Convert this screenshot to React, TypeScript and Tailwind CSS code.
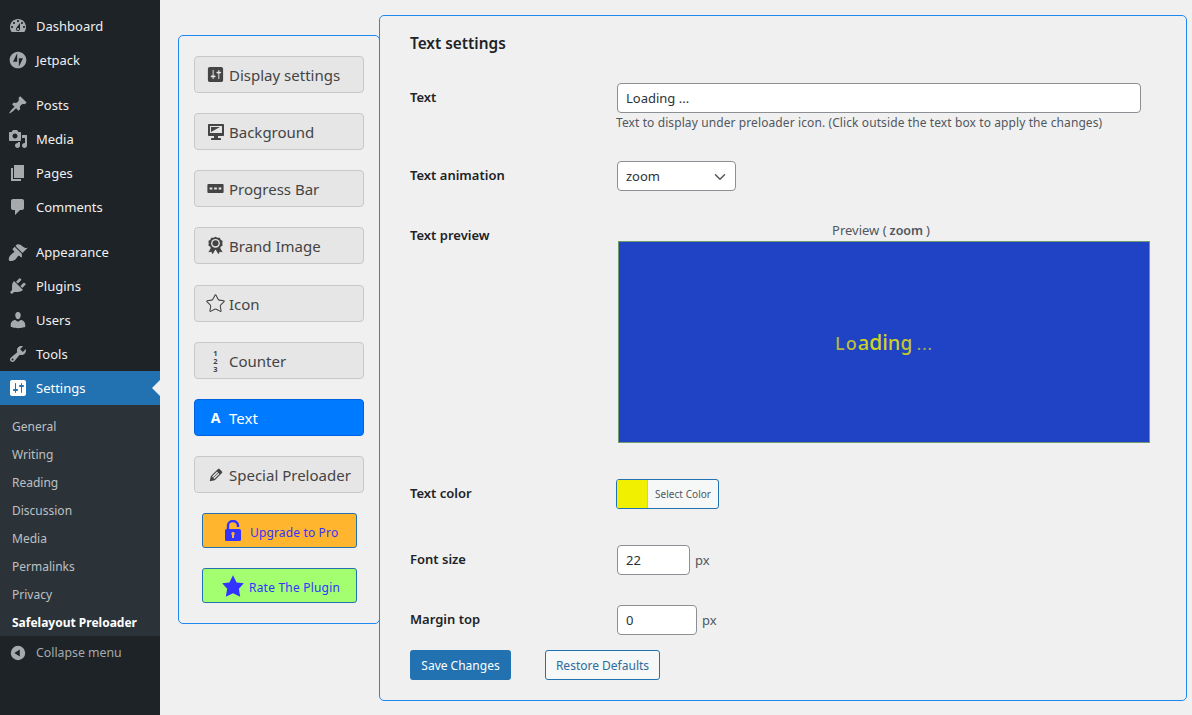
import type { ReactNode } from 'react';
import { ChevronDown, Star } from 'lucide-react';

const PATHS = {
  dashboard:
    'M3.76 16h12.48c1.1-1.37 1.76-3.11 1.76-5 0-4.42-3.58-8-8-8s-8 3.58-8 8c0 1.89.66 3.63 1.76 5zM10 4c.55 0 1 .45 1 1s-.45 1-1 1-1-.45-1-1 .45-1 1-1zM6 6c.55 0 1 .45 1 1s-.45 1-1 1-1-.45-1-1 .45-1 1-1zm8 0c.55 0 1 .45 1 1s-.45 1-1 1-1-.45-1-1 .45-1 1-1zm-5.37 5.55L12 7v6c0 1.1-.9 2-2 2s-2-.9-2-2c0-.57.24-1.08.63-1.45zM4 10c.55 0 1 .45 1 1s-.45 1-1 1-1-.45-1-1 .45-1 1-1zm12 0c.55 0 1 .45 1 1s-.45 1-1 1-1-.45-1-1 .45-1 1-1zm-5 3c0-.55-.45-1-1-1s-1 .45-1 1 .45 1 1 1 1-.45 1-1z',
  post: 'M10.44 3.02l1.82-1.82 6.36 6.35-1.83 1.82c-1.05-.68-2.48-.57-3.41.36l-.75.75c-.92.93-1.04 2.35-.35 3.41l-1.83 1.82-2.41-2.41-2.8 2.79c-.42.42-3.38 2.71-3.8 2.29s1.86-3.39 2.28-3.81l2.79-2.79L4.1 9.36l1.83-1.82c1.05.69 2.48.57 3.4-.36l.75-.75c.93-.92 1.05-2.35.36-3.41z',
  media:
    'M13 11V4c0-.55-.45-1-1-1h-1.67L9 1H5L3.67 3H2c-.55 0-1 .45-1 1v7c0 .55.45 1 1 1h10c.55 0 1-.45 1-1zM7 4.5c1.38 0 2.5 1.12 2.5 2.5S8.38 9.5 7 9.5 4.5 8.38 4.5 7 5.62 4.5 7 4.5zM14 6h5v10.5c0 1.38-1.12 2.5-2.5 2.5S14 17.88 14 16.5s1.12-2.5 2.5-2.5c.17 0 .34.02.5.05V9h-3V6zm-4 8.05V13h2v3.5c0 1.38-1.12 2.5-2.5 2.5S7 17.88 7 16.5 8.12 14 9.5 14c.17 0 .34.02.5.05z',
  pages: 'M6 15V2h10v13H6zm-1 1h8v2H3V5h2v11z',
  comments:
    'M5 2h9c1.1 0 2 .9 2 2v7c0 1.1-.9 2-2 2h-2l-5 5v-5H5c-1.1 0-2-.9-2-2V4c0-1.1.9-2 2-2z',
  appearance:
    'M14.48 11.06L7.41 3.99l1.5-1.5c.5-.56 2.3-.47 3.51.32 1.21.8 1.43 1.28 2.91 2.1 1.18.64 2.45 1.26 4.45.85zm-.71.71L6.7 4.7 4.93 6.47c-.39.39-.39 1.02 0 1.41l1.06 1.06c.39.39.39 1.03 0 1.42-.6.6-1.43 1.11-2.21 1.69-.35.26-.7.53-1.01.84C1.43 13.71 0 17 1.22 18.78c2 .7 5.07-.21 6.4-1.55.31-.31.58-.66.84-1.01.58-.78 1.09-1.61 1.69-2.21.39-.39 1.03-.39 1.42 0l1.06 1.06c.39.39 1.02.39 1.41 0z',
  plugins:
    'M13.11 4.36L9.87 7.6 8 5.73l3.24-3.24c.35-.34 1.05-.2 1.56.32.52.51.66 1.21.31 1.55zm-8 1.77l.91-1.12 9.01 9.01-1.19.84c-.71.71-2.63 1.16-3.82 1.16H6.14L4.9 17.26c-.59.59-1.54.59-2.12 0-.59-.58-.59-1.53 0-2.12l1.24-1.24v-3.88c0-1.13.4-3.19 1.09-3.89zm7.26 3.97l3.24-3.24c.34-.35 1.04-.21 1.55.31.52.51.66 1.21.31 1.55l-3.24 3.25z',
  users:
    'M10 9.25c-2.27 0-2.73-3.44-2.73-3.44C7 4.02 7.82 2 9.97 2c2.16 0 2.98 2.02 2.71 3.81 0 0-.41 3.44-2.68 3.44zm0 2.57L12.72 10c2.39 0 4.52 2.33 4.52 4.53v2.49s-3.65 1.13-7.24 1.13c-3.65 0-7.24-1.13-7.24-1.13v-2.49c0-2.25 1.94-4.48 4.47-4.48z',
  tools:
    'M16.68 9.77c-1.34 1.34-3.3 1.67-4.95.99l-5.41 6.52c-.99.99-2.59.99-3.58 0s-.99-2.59 0-3.57l6.52-5.42c-.68-1.65-.35-3.61.99-4.95 1.28-1.28 3.12-1.62 4.72-1.06l-2.89 2.89 2.82 2.82 2.86-2.87c.53 1.58.18 3.39-1.08 4.65zM3.81 16.21c.4.39 1.04.39 1.43 0 .4-.4.4-1.04 0-1.43-.39-.4-1.03-.4-1.43 0-.39.39-.39 1.03 0 1.43z',
  settings:
    'M18 16V4c0-1.1-.9-2-2-2H4c-1.1 0-2 .9-2 2v12c0 1.1.9 2 2 2h12c1.1 0 2-.9 2-2zM8 11h1c.55 0 1 .45 1 1s-.45 1-1 1H8v1.5c0 .28-.22.5-.5.5s-.5-.22-.5-.5V13H6c-.55 0-1-.45-1-1s.45-1 1-1h1V5.5c0-.28.22-.5.5-.5s.5.22.5.5V11zm5-2h-1c-.55 0-1-.45-1-1s.45-1 1-1h1V5.5c0-.28.22-.5.5-.5s.5.22.5.5V7h1c.55 0 1 .45 1 1s-.45 1-1 1h-1v5.5c0 .28-.22.5-.5.5s-.5-.22-.5-.5V9z',
  desktop:
    'M3 2h14c.55 0 1 .45 1 1v10c0 .55-.45 1-1 1h-5v2h2c.55 0 1 .45 1 1v1H5v-1c0-.55.45-1 1-1h2v-2H3c-.55 0-1-.45-1-1V3c0-.55.45-1 1-1zm13 9V4H4v7h12zM5 5h9L5 10V5z',
  edit: 'M13.89 3.39l2.71 2.72c.46.46.42 1.24.03 1.64l-8.01 8.02-5.56 1.16 1.16-5.58s7.6-7.63 7.99-8.03c.39-.39 1.22-.39 1.68.07zm-2.73 2.79l-5.59 5.61 1.11 1.11 5.54-5.65zm-2.97 8.23l5.58-5.6-1.07-1.08-5.59 5.6z',
  starFilled: 'M10 1l3 6 6 .75-4.12 4.62L16 19l-6-3-6 3 1.13-6.63L1 7.75 7 7z',
};

function Dashicon({ d, className }: { d: string; className: string }) {
  return (
    <svg viewBox="0 0 20 20" fill="currentColor" className={className}>
      <path d={d} />
    </svg>
  );
}

function JetpackIcon() {
  return (
    <svg viewBox="0 0 24 24" fill="currentColor" className="w-[20px] h-[20px]">
      <path d="M12 2C6.5 2 2 6.5 2 12s4.5 10 10 10 10-4.5 10-10S17.5 2 12 2zM11 14H6l5-10v10zm2 6V10h5l-5 10z" />
    </svg>
  );
}

function CollapseIcon() {
  return (
    <svg viewBox="0 0 20 20" fill="currentColor" className="w-[18px] h-[18px]">
      <path d="M10 2a8 8 0 1 0 0 16 8 8 0 0 0 0-16zm2 12-6-4 6-4v8z" />
    </svg>
  );
}

function ProgressIcon() {
  return (
    <svg viewBox="0 0 18 10" className="w-[17px] h-[9px]">
      <rect width="18" height="10" rx="1" fill="#444" />
      <path d="M2.5 4h3v2h-3zM7.5 4h3v2h-3zM12.5 4h3v2h-3z" fill="#e6e6e6" />
    </svg>
  );
}

function AwardIcon() {
  return (
    <svg viewBox="0 0 20 20" className="w-[19px] h-[19px]">
      <path d="M6 11 2.5 17l3-.4 1.5 2.6L10 14l3 5.2 1.5-2.6 3 .4L14 11z" fill="#444" />
      <path
        d="m10 .8 2.1 1.1 2.4-.1 1 2.2 2 1.3-.4 2.4.4 2.4-2 1.3-1 2.2-2.4-.1-2.1 1.1-2.1-1.1-2.4.1-1-2.2-2-1.3.4-2.4-.4-2.4 2-1.3 1-2.2 2.4.1z"
        fill="#444"
      />
      <circle cx="10" cy="7.7" r="4.6" fill="#e6e6e6" />
      <circle cx="10" cy="7.7" r="3.2" fill="#444" />
    </svg>
  );
}

function UnlockIcon() {
  return (
    <svg viewBox="0 0 16 21" className="w-[16px] h-[21px]">
      <path d="M3 9V5.5a5 4.5 0 0 1 10 0V7" fill="none" stroke="#3333ff" strokeWidth="2.4" />
      <rect y="9" width="16" height="12" rx="1.5" fill="#3333ff" />
      <path d="M8 12a1.7 1.7 0 0 1 1 3.1V18H7v-2.9A1.7 1.7 0 0 1 8 12z" fill="#ffb62e" />
    </svg>
  );
}

const menuGroups = [
  [
    { label: 'Dashboard', icon: <Dashicon d={PATHS.dashboard} className="w-[20px] h-[20px]" /> },
    { label: 'Jetpack', icon: <JetpackIcon /> },
  ],
  [
    { label: 'Posts', icon: <Dashicon d={PATHS.post} className="w-[20px] h-[20px]" /> },
    { label: 'Media', icon: <Dashicon d={PATHS.media} className="w-[20px] h-[20px]" /> },
    { label: 'Pages', icon: <Dashicon d={PATHS.pages} className="w-[20px] h-[20px]" /> },
    { label: 'Comments', icon: <Dashicon d={PATHS.comments} className="w-[20px] h-[20px]" /> },
  ],
  [
    { label: 'Appearance', icon: <Dashicon d={PATHS.appearance} className="w-[20px] h-[20px]" /> },
    { label: 'Plugins', icon: <Dashicon d={PATHS.plugins} className="w-[20px] h-[20px]" /> },
    { label: 'Users', icon: <Dashicon d={PATHS.users} className="w-[20px] h-[20px]" /> },
    { label: 'Tools', icon: <Dashicon d={PATHS.tools} className="w-[20px] h-[20px]" /> },
  ],
];

const subMenu = ['General', 'Writing', 'Reading', 'Discussion', 'Media', 'Permalinks', 'Privacy'];

const tabs: { label: string; icon: ReactNode; gap: string; active?: boolean }[] = [
  { label: 'Display settings', gap: 'mb-[20px]', icon: <Dashicon d={PATHS.settings} className="w-[19px] h-[19px] text-[#444]" /> },
  { label: 'Background', gap: 'mb-[20px]', icon: <Dashicon d={PATHS.desktop} className="w-[20px] h-[20px] text-[#444]" /> },
  { label: 'Progress Bar', gap: 'mb-[20px]', icon: <ProgressIcon /> },
  { label: 'Brand Image', gap: 'mb-[21px]', icon: <AwardIcon /> },
  { label: 'Icon', gap: 'mb-[20px]', icon: <Star size={21} strokeWidth={1.2} className="text-[#444]" /> },
  {
    label: 'Counter',
    gap: 'mb-[20px]',
    icon: (
      <span className="flex flex-col items-center text-[7.5px] leading-[8px] font-bold text-[#444]">
        <span>1</span>
        <span>2</span>
        <span>3</span>
      </span>
    ),
  },
  {
    label: 'Text',
    gap: 'mb-[20px]',
    active: true,
    icon: <span className="text-[14px] font-bold text-white">A</span>,
  },
  { label: 'Special Preloader', gap: 'mb-[20px]', icon: <Dashicon d={PATHS.edit} className="w-[18px] h-[18px] text-[#444]" /> },
];

const loadingLetters = [
  { c: 'L', cls: 'text-[18px] mr-[1px] text-[#b3b640]' },
  { c: 'o', cls: 'text-[18px] mr-[1px] text-[#bcbf38]' },
  { c: 'a', cls: 'text-[20px] text-[#cdd024]' },
  { c: 'd', cls: 'text-[21px] text-[#d2d520]' },
  { c: 'i', cls: 'text-[21px] text-[#d2d520]' },
  { c: 'n', cls: 'text-[20px] text-[#cdd024]' },
  { c: 'g', cls: 'text-[19px] text-[#c3c62c]' },
  { c: '\u00a0', cls: 'text-[18px] text-[#a9ac4c]' },
  { c: '...', cls: 'text-[16px] tracking-[1px] text-[#a9ac4c]' },
];

function Sidebar() {
  return (
    <aside className="w-[160px] h-[715px] shrink-0 bg-[#1d2327] pt-[9px] text-[13px] text-[#f0f0f1]">
      {menuGroups.map((group) => (
        <div key={group[0].label} className="mb-[11px]">
          {group.map((item) => (
            <div key={item.label} className="flex items-center h-[34px]">
              <span className="w-[36px] flex justify-center text-[#a7aaad]">{item.icon}</span>
              <span className="pt-[2px]">{item.label}</span>
            </div>
          ))}
        </div>
      ))}
      <div className="relative flex items-center h-[34px] -mt-[11px] bg-[#2271b1] text-white">
        <span className="w-[36px] flex justify-center">
          <Dashicon d={PATHS.settings} className="w-[20px] h-[20px]" />
        </span>
        <span className="pt-[2px]">Settings</span>
        <span className="absolute right-0 top-[9px] border-y-[8px] border-r-[8px] border-y-transparent border-r-[#f0f0f0]" />
      </div>
      <div className="bg-[#2c3338] pt-[7px] text-[12px] text-[#bcc0c4]">
        {subMenu.map((item) => (
          <div key={item} className="flex items-center h-[28px] pl-[12px] pt-[2px]">
            {item}
          </div>
        ))}
        <div className="flex items-center h-[28px] pl-[12px] pt-[2px] font-bold text-white">
          Safelayout Preloader
        </div>
      </div>
      <div className="flex items-center h-[33px] text-[#a7aaad]">
        <span className="w-[36px] flex justify-center">
          <CollapseIcon />
        </span>
        <span className="pt-[2px] text-[12.3px]">Collapse menu</span>
      </div>
    </aside>
  );
}

function TabPanel() {
  return (
    <div className="w-[202px] h-[589px] mt-[35px] ml-[18px] -mr-px shrink-0 border border-[#1e88f0] rounded-[5px] pt-[20px] pl-[15px]">
      {tabs.map((tab) => (
        <div
          key={tab.label}
          className={`${tab.gap} h-[37px] w-[170px] flex items-center border rounded-[4px] text-[15px] ${
            tab.active
              ? 'bg-[#007bff] border-[#0062e0] text-white'
              : 'bg-[#e6e6e6] border-[#c8c8c8] text-[#444]'
          }`}
        >
          <span className="w-[34px] pl-[7px] flex justify-center">{tab.icon}</span>
          <span className="pt-[2px]">{tab.label}</span>
        </div>
      ))}
      <div className="w-[155px] h-[35px] ml-[8px] mb-[20px] pl-[22px] flex items-center gap-[9px] bg-[#ffb62e] border border-[#2271b1] rounded-[3px] text-[12px] tracking-[0.15px] text-[#3333ff]">
        <UnlockIcon />
        <span className="pt-[4px]">Upgrade to Pro</span>
      </div>
      <div className="w-[155px] h-[35px] ml-[8px] pl-[18px] flex items-center gap-[4px] bg-[#a3ff6f] border border-[#2271b1] rounded-[3px] text-[12px] tracking-[0.2px] text-[#3333ff]">
        <Dashicon d={PATHS.starFilled} className="w-[24px] h-[24px]" />
        <span className="pt-[4px]">Rate The Plugin</span>
      </div>
    </div>
  );
}

function Row({
  label,
  className,
  children,
}: {
  label: string;
  className: string;
  children: ReactNode;
}) {
  return (
    <div className={`flex items-start ${className}`}>
      <label className="w-[207px] h-[20px] mt-[5px] shrink-0 flex items-center text-[13px] font-semibold text-[#1d2327]">
        {label}
      </label>
      <div>{children}</div>
    </div>
  );
}

function SettingsPanel() {
  return (
    <div className="w-[808px] h-[686px] mt-[15px] shrink-0 border border-[#1e88f0] rounded-[5px] pt-[15px] pl-[30px] text-[#3c434a]">
      <h2 className="h-[24px] pt-[2px] flex items-center text-[15.4px] font-semibold text-[#1d2327]">
        Text settings
      </h2>

      <Row label="Text" className="mt-[28px]">
        <input
          defaultValue="Loading ..."
          className="block w-[524px] h-[30px] px-[8px] bg-white border border-[#8c8f94] rounded-[4px] text-[13px] text-[#2c3338]"
        />
        <p className="h-[18px] pt-[2px] -ml-px flex items-center text-[12px] tracking-[0.1px] whitespace-nowrap text-[#50575e]">
          Text to display under preloader icon. (Click outside the text box to apply the changes)
        </p>
      </Row>

      <Row label="Text animation" className="mt-[30px]">
        <div className="relative w-[119px]">
          <select
            defaultValue="zoom"
            className="block w-full h-[30px] pl-[8px] pt-[1px] bg-white border border-[#8c8f94] rounded-[4px] appearance-none text-[13px] text-[#2c3338]"
          >
            <option value="zoom">zoom</option>
          </select>
          <ChevronDown
            size={18}
            strokeWidth={2}
            className="absolute right-[7px] top-[7px] text-[#50575e] pointer-events-none"
          />
        </div>
      </Row>

      <Row label="Text preview" className="mt-[30px]">
        <div className="w-[533px] pl-px">
          <p className="h-[20px] pr-[6px] flex items-center justify-center gap-[3px] text-[13px] text-[#50575e]">
            <span>Preview (</span>
            <span className="text-[12.5px] font-semibold">zoom</span>
            <span>)</span>
          </p>
          <div className="h-[202px] flex items-center justify-center bg-[#1f43c4] border border-[#6f9c6a]">
            <div className="flex items-baseline h-[24px] leading-[24px] font-medium">
              {loadingLetters.map((l, i) => (
                <span key={i} className={l.cls}>
                  {l.c}
                </span>
              ))}
            </div>
          </div>
        </div>
      </Row>

      <Row label="Text color" className="mt-[36px]">
        <div className="-ml-px flex w-[103px] h-[30px] border border-[#2271b1] rounded-[3px] overflow-hidden bg-[#f6f7f7]">
          <span className="w-[31px] bg-[#f0f000] border-r border-[#c3c4c7]" />
          <span className="flex-1 flex items-center justify-center text-[10px] tracking-[0.05px] text-[#50575e]">
            Select Color
          </span>
        </div>
      </Row>

      <Row label="Font size" className="mt-[36px]">
        <div className="flex items-center gap-[5px]">
          <input
            defaultValue="22"
            className="w-[73px] h-[30px] px-[8px] bg-white border border-[#8c8f94] rounded-[4px] text-[13px] text-[#2c3338]"
          />
          <span className="pt-[2px] text-[13px] text-[#50575e]">px</span>
        </div>
      </Row>

      <Row label="Margin top" className="mt-[30px]">
        <div className="flex items-center gap-[5px]">
          <input
            defaultValue="0"
            className="w-[80px] h-[30px] px-[8px] bg-white border border-[#8c8f94] rounded-[4px] text-[13px] text-[#2c3338]"
          />
          <span className="pt-[2px] text-[13px] text-[#50575e]">px</span>
        </div>
      </Row>

      <div className="flex gap-[34px] mt-[15px]">
        <button className="w-[101px] h-[30px] pt-[2px] bg-[#2271b1] rounded-[3px] text-[12px] text-white">
          Save Changes
        </button>
        <button className="w-[115px] h-[30px] pt-[2px] bg-[#f6f7f7] border border-[#2271b1] rounded-[3px] text-[12px] text-[#2f6c9c]">
          Restore Defaults
        </button>
      </div>
    </div>
  );
}

export default function App() {
  return (
    <div className="flex w-[1192px] h-[715px] overflow-hidden bg-[#f0f0f0] font-['Noto_Sans',sans-serif]">
      <Sidebar />
      <TabPanel />
      <SettingsPanel />
    </div>
  );
}
